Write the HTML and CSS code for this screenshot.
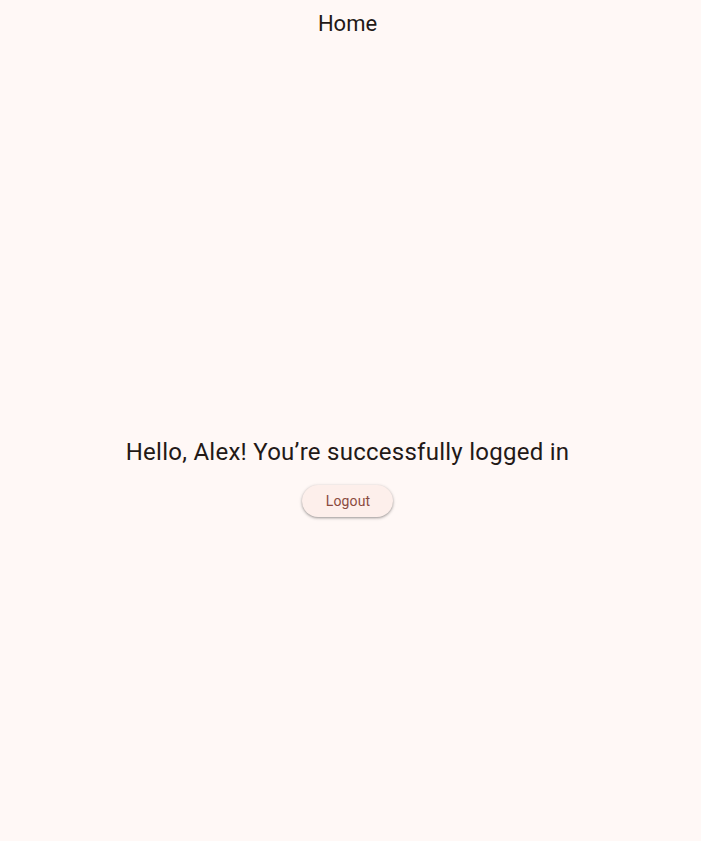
FILE: index.html
```html
<!DOCTYPE html>
<html lang="en">
<head>
<meta charset="utf-8">
<title>Home</title>
<link rel="stylesheet" href="styles.css">
</head>
<body>
<header class="app-bar">
  <h1 class="app-title">Home</h1>
</header>
<main class="content">
  <p class="greeting">Hello, Alex! You’re successfully logged in</p>
  <button class="logout-btn" type="button">Logout</button>
</main>
</body>
</html>
```
FILE: styles.css
```css
html, body {
  margin: 0;
  padding: 0;
  height: 100%;
}
body {
  background: #fff8f6;
  font-family: Roboto, "Noto Sans", sans-serif;
  color: #231917;
  padding-right: 6px;
}
.app-bar {
  height: 64px;
  box-sizing: border-box;
  padding-top: 10px;
  display: flex;
  justify-content: center;
}
.app-title {
  margin: 0;
  font-size: 22px;
  line-height: 28px;
  font-weight: 400;
  color: #231917;
}
.content {
  display: flex;
  flex-direction: column;
  align-items: center;
  padding-top: 372px;
}
.greeting {
  margin: 0;
  font-size: 24px;
  line-height: 32px;
  font-weight: 400;
  letter-spacing: 0.26px;
  color: #231917;
}
.logout-btn {
  margin-top: 17px;
  height: 32px;
  padding: 0 23px 0 24px;
  border: none;
  border-radius: 16px;
  background: #fdefeb;
  color: #8b4a3f;
  font-family: Roboto, "Noto Sans", sans-serif;
  font-size: 14px;
  font-weight: 400;
  letter-spacing: 0.1px;
  box-shadow: 0 1px 2px rgba(0,0,0,0.25), 0 1px 3px 1px rgba(0,0,0,0.12);
  cursor: pointer;
}
```
